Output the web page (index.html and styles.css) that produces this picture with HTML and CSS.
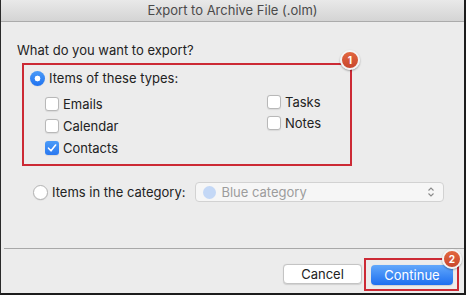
FILE: index.html
```html
<!DOCTYPE html>
<html lang="en">
<head>
    <meta charset="UTF-8">
    <meta name="viewport" content="width=device-width, initial-scale=1.0">
    <title>Export to Archive File (.olm)</title>
    <link rel="stylesheet" href="styles.css">
</head>
<body>
    <div class="window">
        <div class="titlebar">Export to Archive File (.olm)</div>

        <div class="content">
            <p class="question">What do you want to export?</p>

            <div class="callout types">
                <span class="badge">1</span>
                <div class="option">
                    <span class="radio checked"></span>
                    <span>Items of these types:</span>
                </div>
                <div class="type-grid">
                    <div class="col">
                        <div class="option"><span class="check"></span><span>Emails</span></div>
                        <div class="option"><span class="check"></span><span>Calendar</span></div>
                        <div class="option">
                            <span class="check checked">
                                <svg viewBox="0 0 14 14" width="14" height="14"><polyline points="3.5,7.2 6,9.8 10.6,4" fill="none" stroke="#fff" stroke-width="1.6" stroke-linecap="round" stroke-linejoin="round"/></svg>
                            </span>
                            <span>Contacts</span>
                        </div>
                    </div>
                    <div class="col col-right">
                        <div class="option"><span class="check"></span><span>Tasks</span></div>
                        <div class="option"><span class="check"></span><span>Notes</span></div>
                    </div>
                </div>
            </div>

            <div class="category-row">
                <div class="option">
                    <span class="radio"></span>
                    <span>Items in the category:</span>
                </div>
                <div class="popup">
                    <span class="dot"></span>
                    <span class="popup-label">Blue category</span>
                    <svg class="stepper" viewBox="0 0 8 12" width="8" height="12"><polyline points="1.5,4.5 4,2 6.5,4.5" fill="none" stroke="#8a8a8a" stroke-width="1.1"/><polyline points="1.5,7.5 4,10 6.5,7.5" fill="none" stroke="#8a8a8a" stroke-width="1.1"/></svg>
                </div>
            </div>
        </div>

        <div class="footer">
            <button class="btn">Cancel</button>
            <div class="callout action">
                <span class="badge">2</span>
                <button class="btn primary">Continue</button>
            </div>
        </div>
    </div>
</body>
</html>
```

FILE: styles.css
```css
* {
    box-sizing: border-box;
}
body {
    margin: 0;
    font-family: Inter, "Liberation Sans", sans-serif;
    font-size: 13px;
    color: #222;
    background: #ececec;
}
.window {
    width: 466px;
    height: 295px;
    display: flex;
    flex-direction: column;
    background: #ececec;
    border-left: 1px solid #2a2a2a;
    border-right: 2px solid #1c1c1c;
    border-bottom: 2px solid #1c1c1c;
}
.titlebar {
    height: 22px;
    line-height: 21px;
    text-align: center;
    color: #4a4a4a;
    background: linear-gradient(#e9e9e9, #d4d4d4);
    border-bottom: 1px solid #ababab;
}
.content {
    flex: 1;
    padding: 20px 0 0 16px;
}
.question {
    margin: 0;
    line-height: 16px;
}
.callout {
    position: relative;
    border: 2px solid #cc2a35;
}
.badge {
    position: absolute;
    width: 20px;
    height: 20px;
    border-radius: 50%;
    border: 2px solid #f4f4f4;
    background: linear-gradient(#e2673f, #c8462d);
    box-shadow: 0 1px 2px rgba(0,0,0,0.35);
    color: #fff;
    font-size: 10px;
    font-weight: 700;
    line-height: 16px;
    text-align: center;
}
.types {
    width: 330px;
    margin: 5px 0 0 5px;
    padding: 5px 0 8px 6px;
}
.types .badge {
    top: -15px;
    right: -10px;
}
.option {
    display: flex;
    align-items: center;
    gap: 4px;
    height: 16px;
    line-height: 16px;
}
.radio {
    width: 15px;
    height: 15px;
    border-radius: 50%;
    background: #fff;
    border: 1px solid #b4b4b4;
    box-shadow: 0 0.5px 1px rgba(0,0,0,0.1);
}
.radio.checked {
    border: none;
    background: radial-gradient(circle, #fff 0 2.6px, transparent 3.2px), linear-gradient(#4b9bf8, #1f72f0);
}
.check {
    width: 14px;
    height: 14px;
    border-radius: 3px;
    background: #fff;
    border: 1px solid #b8b8b8;
    box-shadow: 0 0.5px 1px rgba(0,0,0,0.08);
}
.check.checked {
    border: none;
    background: linear-gradient(#4b9bf8, #2a78f0);
}
.check svg {
    display: block;
}
.type-grid {
    display: grid;
    grid-template-columns: 222px auto;
    padding-left: 15px;
    margin-top: 10px;
}
.col {
    display: flex;
    flex-direction: column;
    gap: 6px;
}
.col-right {
    gap: 5px;
    margin-top: -2px;
}
.category-row {
    display: flex;
    align-items: center;
    gap: 10px;
    margin: 16px 0 0 16px;
}
.popup {
    width: 249px;
    height: 20px;
    display: flex;
    align-items: center;
    gap: 5px;
    padding: 0 8px 0 7px;
    background: #f6f6f6;
    border: 1px solid #d2d2d2;
    border-radius: 4px;
}
.dot {
    width: 13px;
    height: 13px;
    border-radius: 50%;
    background: #c4d8f6;
}
.popup-label {
    flex: 1;
    color: #9c9c9c;
}
.footer {
    display: flex;
    justify-content: flex-end;
    align-items: center;
    gap: 2px;
    height: 45px;
    margin-left: 3px;
    padding: 7px 5px 1px 0;
    border-top: 1px solid #a8a8a8;
}
.btn {
    height: 20px;
    min-width: 79px;
    padding: 0 12px;
    font-family: inherit;
    font-size: 13px;
    color: #222;
    background: #fff;
    border: 1px solid #c4c4c4;
    border-radius: 4px;
    box-shadow: 0 0.5px 1px rgba(0,0,0,0.12);
}
.btn.primary {
    min-width: 82px;
    color: #fff;
    border: none;
    background: linear-gradient(#62a8fb, #1e6ff0);
}
.action {
    padding: 5px 4px 4px 5px;
}
.action .badge {
    top: -11px;
    right: -5px;
}
```
